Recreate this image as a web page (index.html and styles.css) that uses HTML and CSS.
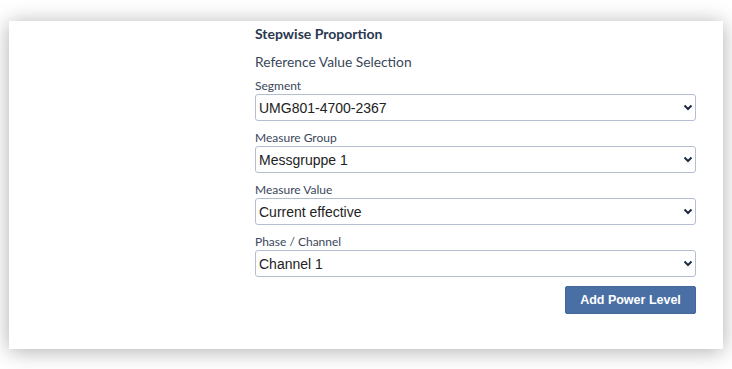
FILE: index.html
```html
<!DOCTYPE html>
<html>
<head>
<meta charset="utf-8">
<link rel="stylesheet" href="styles.css">
</head>
<body>
<div class="card">
  <div class="side"></div>
  <div class="form">
    <div class="title">Stepwise Proportion</div>
    <div class="subtitle">Reference Value Selection</div>
    <div class="field">
      <label class="label">Segment</label>
      <div class="select-wrap">
        <select class="select"><option>UMG801-4700-2367</option></select>
        <svg class="chev" width="10" height="7" viewBox="0 0 10 7"><path d="M1.5 1.5 L5 5 L8.5 1.5" fill="none" stroke="#1f2d44" stroke-width="2"/></svg>
      </div>
    </div>
    <div class="field">
      <label class="label">Measure Group</label>
      <div class="select-wrap">
        <select class="select"><option>Messgruppe 1</option></select>
        <svg class="chev" width="10" height="7" viewBox="0 0 10 7"><path d="M1.5 1.5 L5 5 L8.5 1.5" fill="none" stroke="#1f2d44" stroke-width="2"/></svg>
      </div>
    </div>
    <div class="field">
      <label class="label">Measure Value</label>
      <div class="select-wrap">
        <select class="select"><option>Current effective</option></select>
        <svg class="chev" width="10" height="7" viewBox="0 0 10 7"><path d="M1.5 1.5 L5 5 L8.5 1.5" fill="none" stroke="#1f2d44" stroke-width="2"/></svg>
      </div>
    </div>
    <div class="field">
      <label class="label">Phase / Channel</label>
      <div class="select-wrap">
        <select class="select"><option>Channel 1</option></select>
        <svg class="chev" width="10" height="7" viewBox="0 0 10 7"><path d="M1.5 1.5 L5 5 L8.5 1.5" fill="none" stroke="#1f2d44" stroke-width="2"/></svg>
      </div>
    </div>
    <div class="actions">
      <button class="btn">Add Power Level</button>
    </div>
  </div>
</div>
</body>
</html>
```
FILE: styles.css
```css
html, body {
  margin: 0;
  padding: 0;
  background: #ffffff;
}
body {
  padding: 21px 9px 20px 9px;
  font-family: "Lato", "Liberation Sans", sans-serif;
  color: #2c3a4f;
}
.card {
  width: 714px;
  height: 328px;
  box-sizing: border-box;
  background: #ffffff;
  box-shadow: 0 2px 20px rgba(0, 0, 0, 0.32);
  display: grid;
  grid-template-columns: 246px 441px;
  padding-top: 3px;
}
.form {
  display: flex;
  flex-direction: column;
}
.title {
  font-size: 14px;
  font-weight: 700;
  line-height: 20px;
  color: #2a3850;
}
.subtitle {
  font-size: 13.8px;
  line-height: 20px;
  margin-top: 8px;
  margin-bottom: 6px;
  color: #3a475a;
}
.field {
  display: flex;
  flex-direction: column;
  margin-bottom: 9px;
}
.label {
  font-size: 12px;
  line-height: 16px;
  color: #3a475a;
}
.select-wrap {
  position: relative;
  height: 27px;
}
.select {
  appearance: none;
  -webkit-appearance: none;
  width: 100%;
  height: 27px;
  box-sizing: border-box;
  border: 1px solid #b3bfd1;
  border-radius: 3px;
  background: #ffffff;
  font-family: "Liberation Sans", Arial, sans-serif;
  font-size: 14px;
  color: #222;
  padding: 0 20px 0 3px;
  margin: 0;
}
.chev {
  position: absolute;
  right: 3px;
  top: 10px;
  pointer-events: none;
}
.actions {
  display: flex;
  justify-content: flex-end;
}
.btn {
  width: 131px;
  height: 28px;
  background: #4a6fa5;
  border: 1px solid #44679b;
  border-radius: 2px;
  color: #ffffff;
  font-family: "Liberation Sans", Arial, sans-serif;
  font-weight: 700;
  font-size: 12.5px;
  padding: 0;
}
```
